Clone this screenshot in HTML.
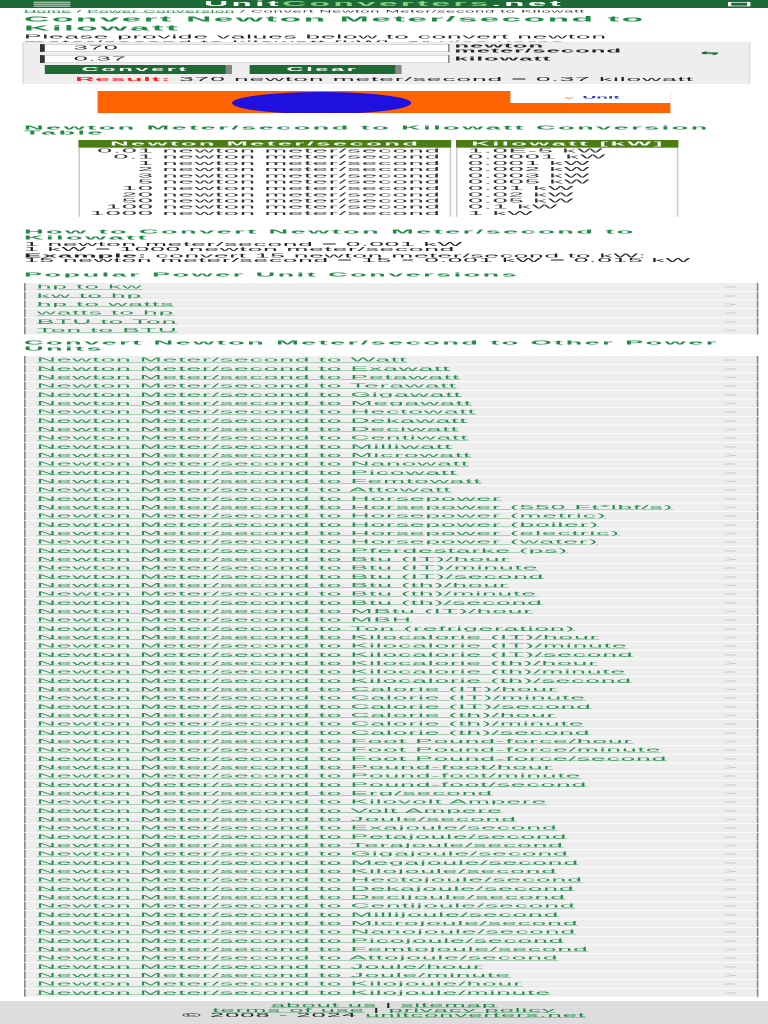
<!DOCTYPE html>
<html><head><meta charset="utf-8"><style>
html,body{margin:0;padding:0;width:768px;height:1024px;overflow:hidden;background:#fff}
#w{position:absolute;left:0;top:0;width:480px;height:3072px;transform:scale(1.6,0.33333);transform-origin:0 0;font-family:"Liberation Sans",Arial,sans-serif;color:#222}
.a{position:absolute;white-space:nowrap}
#hd{left:0;top:0;width:480px;height:24px;background:#1d6a36}
.g{color:#1f8a44}
h1,h2{margin:0;font-weight:bold;color:#1f8a44}
.box{left:14px;top:126px;width:455px;height:125px;background:#eee;border:1px solid #ddd;box-sizing:border-box}
.inp{left:25px;width:256px;height:24px;background:#fff;border:1px solid #888;border-left:3px solid #333;box-sizing:border-box;font-size:16px;letter-spacing:0.5px;line-height:22px;padding-left:18px}
.btn{height:27px;top:195px;background:#1d6a36;color:#fff;font-weight:bold;font-size:15px;line-height:27px;text-align:center;box-shadow:4px 0 0 #888;letter-spacing:1.5px}
table{border-collapse:separate;border-spacing:3px 0}
td{font-size:17px;letter-spacing:0.6px;line-height:18.8px;height:18.8px;padding:0 6px;border-left:1px solid #ccc;border-right:1px solid #ccc;color:#333}
th{background:#4a7d14;color:#fff;font-size:16px;height:21px;line-height:21px;letter-spacing:1.5px}
.lst{left:15px;width:459px}
.lst div{height:24px;margin-bottom:2px;background:#eee;border-left:1px solid #888;border-right:1px solid #888;box-sizing:border-box;font-size:16.5px;letter-spacing:0.55px;line-height:24px;padding-left:7px;position:relative}
.lst div span{color:#2a9050;text-decoration:underline}
.lst div:after{content:">";position:absolute;right:12px;top:0;color:#bbb;font-size:14px}
#ft{left:0;top:3003px;width:480px;height:69px;background:#ddd;text-align:center;font-size:16px;letter-spacing:0.6px;line-height:15px;padding-top:6px;box-sizing:border-box}
#ft span{color:#1f8a44;text-decoration:underline}
</style></head><body><div id="w">
<div class="a" id="hd">
 <div class="a" style="left:21px;top:5px;width:23px;height:3px;background:#cfe3d5"></div>
 <div class="a" style="left:21px;top:11px;width:23px;height:3px;background:#cfe3d5"></div>
 <div class="a" style="left:21px;top:17px;width:23px;height:3px;background:#cfe3d5"></div>
 <div class="a" style="left:0;width:480px;top:0;text-align:center;font-weight:bold;font-size:21px;letter-spacing:2px;line-height:24px;color:#fff">Unit<span style="color:#7fd27f">Converters</span>.net</div>
 <div class="a" style="left:455px;top:6px;width:14px;height:13px;border:2px solid #fff;box-sizing:border-box"></div>
</div>
<div class="a" style="left:15px;top:26px;font-size:10.5px;letter-spacing:0.4px;line-height:16px;color:#333"><span class="g" style="text-decoration:underline">Home</span> / <span class="g" style="text-decoration:underline">Power Conversion</span> / Convert Newton Meter/second to Kilowatt</div>
<h1 class="a" style="left:15px;top:44px;font-size:22px;letter-spacing:1.5px;line-height:27px">Convert Newton Meter/second to<br>Kilowatt</h1>
<div class="a" style="left:15px;top:101px;font-size:16.5px;letter-spacing:0.45px;line-height:18px">Please provide values below to convert newton<br>meter/second to kilowatt [kW], or <i class="g" style="text-decoration:underline">vice versa</i>.</div>
<div class="a box"></div>
<div class="a inp" style="top:132px">370</div>
<div class="a inp" style="top:165px">0.37</div>
<div class="a" style="left:284px;top:132px;font-size:15px;letter-spacing:0.6px;line-height:14px;font-weight:bold;color:#222">newton<br>meter/second</div>
<div class="a" style="left:284px;top:169px;font-size:15px;letter-spacing:0.6px;line-height:16px;font-weight:bold;color:#222">kilowatt</div>
<div class="a" style="left:438px;top:148px;font-size:14px;line-height:20px;color:#1d6a36;font-weight:bold">⇆</div>
<div class="a btn" style="left:28px;width:113px">Convert</div>
<div class="a btn" style="left:156px;width:91px">Clear</div>
<div class="a" style="left:47px;top:230px;font-size:16.5px;letter-spacing:0.55px;line-height:17px"><b style="color:#f22">Result:</b> 370 newton meter/second = 0.37 kilowatt</div>
<div class="a" style="left:61px;top:273px;width:358px;height:66px;background:#ff6200;overflow:hidden">
 <div class="a" style="left:84px;top:3px;width:112px;height:66px;border-radius:50%;background:#2010e0"></div>
 <div class="a" style="left:258px;top:0;width:100px;height:36px;background:#fff;font-weight:bold;font-size:12px;line-height:36px;color:#2433c8;text-align:center"><span style="color:#ff6200">⌄</span> Unit</div>
</div>
<h2 class="a" style="left:15px;top:375px;font-size:17px;letter-spacing:1.5px;line-height:16px">Newton Meter/second to Kilowatt Conversion<br>Table</h2>
<table class="a" style="left:46px;top:420px">
<tr><th style="width:230px">Newton Meter/second</th><th style="width:137px">Kilowatt [kW]</th></tr>
<tr><td style="text-align:right">0.01 newton meter/second</td><td>1.0E-5 kW</td></tr>
<tr><td style="text-align:right">0.1 newton meter/second</td><td>0.0001 kW</td></tr>
<tr><td style="text-align:right">1 newton meter/second</td><td>0.001 kW</td></tr>
<tr><td style="text-align:right">2 newton meter/second</td><td>0.002 kW</td></tr>
<tr><td style="text-align:right">3 newton meter/second</td><td>0.003 kW</td></tr>
<tr><td style="text-align:right">5 newton meter/second</td><td>0.005 kW</td></tr>
<tr><td style="text-align:right">10 newton meter/second</td><td>0.01 kW</td></tr>
<tr><td style="text-align:right">20 newton meter/second</td><td>0.02 kW</td></tr>
<tr><td style="text-align:right">50 newton meter/second</td><td>0.05 kW</td></tr>
<tr><td style="text-align:right">100 newton meter/second</td><td>0.1 kW</td></tr>
<tr><td style="text-align:right">1000 newton meter/second</td><td>1 kW</td></tr>
</table>
<h2 class="a" style="left:15px;top:687px;font-size:17px;letter-spacing:1.5px;line-height:18px">How to Convert Newton Meter/second to<br>Kilowatt</h2>
<div class="a" style="left:15px;top:726px;font-size:16.5px;letter-spacing:0.45px;line-height:15px">1 newton meter/second = 0.001 kW<br>1 kW = 1000 newton meter/second</div>
<div class="a" style="left:15px;top:760px;font-size:16.5px;letter-spacing:0.45px;line-height:14px"><b>Example:</b> convert 15 newton meter/second to kW:<br>15 newton meter/second = 15 × 0.001 kW = 0.015 kW</div>
<h2 class="a" style="left:15px;top:813px;font-size:17px;letter-spacing:1.5px;line-height:22px">Popular Power Unit Conversions</h2>
<div class="a lst" style="top:849px">
<div><span>hp to kw</span></div><div><span>kw to hp</span></div><div><span>hp to watts</span></div><div><span>watts to hp</span></div><div><span>BTU to Ton</span></div><div><span>Ton to BTU</span></div>
</div>
<h2 class="a" style="left:15px;top:1020px;font-size:17px;letter-spacing:1.5px;line-height:18px">Convert Newton Meter/second to Other Power<br>Units</h2>
<div class="a lst" style="top:1068px">
<div><span>Newton Meter/second to Watt</span></div>
<div><span>Newton Meter/second to Exawatt</span></div>
<div><span>Newton Meter/second to Petawatt</span></div>
<div><span>Newton Meter/second to Terawatt</span></div>
<div><span>Newton Meter/second to Gigawatt</span></div>
<div><span>Newton Meter/second to Megawatt</span></div>
<div><span>Newton Meter/second to Hectowatt</span></div>
<div><span>Newton Meter/second to Dekawatt</span></div>
<div><span>Newton Meter/second to Deciwatt</span></div>
<div><span>Newton Meter/second to Centiwatt</span></div>
<div><span>Newton Meter/second to Milliwatt</span></div>
<div><span>Newton Meter/second to Microwatt</span></div>
<div><span>Newton Meter/second to Nanowatt</span></div>
<div><span>Newton Meter/second to Picowatt</span></div>
<div><span>Newton Meter/second to Femtowatt</span></div>
<div><span>Newton Meter/second to Attowatt</span></div>
<div><span>Newton Meter/second to Horsepower</span></div>
<div><span>Newton Meter/second to Horsepower (550 Ft*lbf/s)</span></div>
<div><span>Newton Meter/second to Horsepower (metric)</span></div>
<div><span>Newton Meter/second to Horsepower (boiler)</span></div>
<div><span>Newton Meter/second to Horsepower (electric)</span></div>
<div><span>Newton Meter/second to Horsepower (water)</span></div>
<div><span>Newton Meter/second to Pferdestarke (ps)</span></div>
<div><span>Newton Meter/second to Btu (IT)/hour</span></div>
<div><span>Newton Meter/second to Btu (IT)/minute</span></div>
<div><span>Newton Meter/second to Btu (IT)/second</span></div>
<div><span>Newton Meter/second to Btu (th)/hour</span></div>
<div><span>Newton Meter/second to Btu (th)/minute</span></div>
<div><span>Newton Meter/second to Btu (th)/second</span></div>
<div><span>Newton Meter/second to MBtu (IT)/hour</span></div>
<div><span>Newton Meter/second to MBH</span></div>
<div><span>Newton Meter/second to Ton (refrigeration)</span></div>
<div><span>Newton Meter/second to Kilocalorie (IT)/hour</span></div>
<div><span>Newton Meter/second to Kilocalorie (IT)/minute</span></div>
<div><span>Newton Meter/second to Kilocalorie (IT)/second</span></div>
<div><span>Newton Meter/second to Kilocalorie (th)/hour</span></div>
<div><span>Newton Meter/second to Kilocalorie (th)/minute</span></div>
<div><span>Newton Meter/second to Kilocalorie (th)/second</span></div>
<div><span>Newton Meter/second to Calorie (IT)/hour</span></div>
<div><span>Newton Meter/second to Calorie (IT)/minute</span></div>
<div><span>Newton Meter/second to Calorie (IT)/second</span></div>
<div><span>Newton Meter/second to Calorie (th)/hour</span></div>
<div><span>Newton Meter/second to Calorie (th)/minute</span></div>
<div><span>Newton Meter/second to Calorie (th)/second</span></div>
<div><span>Newton Meter/second to Foot Pound-force/hour</span></div>
<div><span>Newton Meter/second to Foot Pound-force/minute</span></div>
<div><span>Newton Meter/second to Foot Pound-force/second</span></div>
<div><span>Newton Meter/second to Pound-foot/hour</span></div>
<div><span>Newton Meter/second to Pound-foot/minute</span></div>
<div><span>Newton Meter/second to Pound-foot/second</span></div>
<div><span>Newton Meter/second to Erg/second</span></div>
<div><span>Newton Meter/second to Kilovolt Ampere</span></div>
<div><span>Newton Meter/second to Volt Ampere</span></div>
<div><span>Newton Meter/second to Joule/second</span></div>
<div><span>Newton Meter/second to Exajoule/second</span></div>
<div><span>Newton Meter/second to Petajoule/second</span></div>
<div><span>Newton Meter/second to Terajoule/second</span></div>
<div><span>Newton Meter/second to Gigajoule/second</span></div>
<div><span>Newton Meter/second to Megajoule/second</span></div>
<div><span>Newton Meter/second to Kilojoule/second</span></div>
<div><span>Newton Meter/second to Hectojoule/second</span></div>
<div><span>Newton Meter/second to Dekajoule/second</span></div>
<div><span>Newton Meter/second to Decijoule/second</span></div>
<div><span>Newton Meter/second to Centijoule/second</span></div>
<div><span>Newton Meter/second to Millijoule/second</span></div>
<div><span>Newton Meter/second to Microjoule/second</span></div>
<div><span>Newton Meter/second to Nanojoule/second</span></div>
<div><span>Newton Meter/second to Picojoule/second</span></div>
<div><span>Newton Meter/second to Femtojoule/second</span></div>
<div><span>Newton Meter/second to Attojoule/second</span></div>
<div><span>Newton Meter/second to Joule/hour</span></div>
<div><span>Newton Meter/second to Joule/minute</span></div>
<div><span>Newton Meter/second to Kilojoule/hour</span></div>
<div><span>Newton Meter/second to Kilojoule/minute</span></div>
</div>
<div class="a" id="ft"><span>about us</span> | <span>sitemap</span><br><span>terms of use</span> | <span>privacy policy</span><br>© 2008 - 2024 <span>unitconverters.net</span></div>
</div></body></html>
